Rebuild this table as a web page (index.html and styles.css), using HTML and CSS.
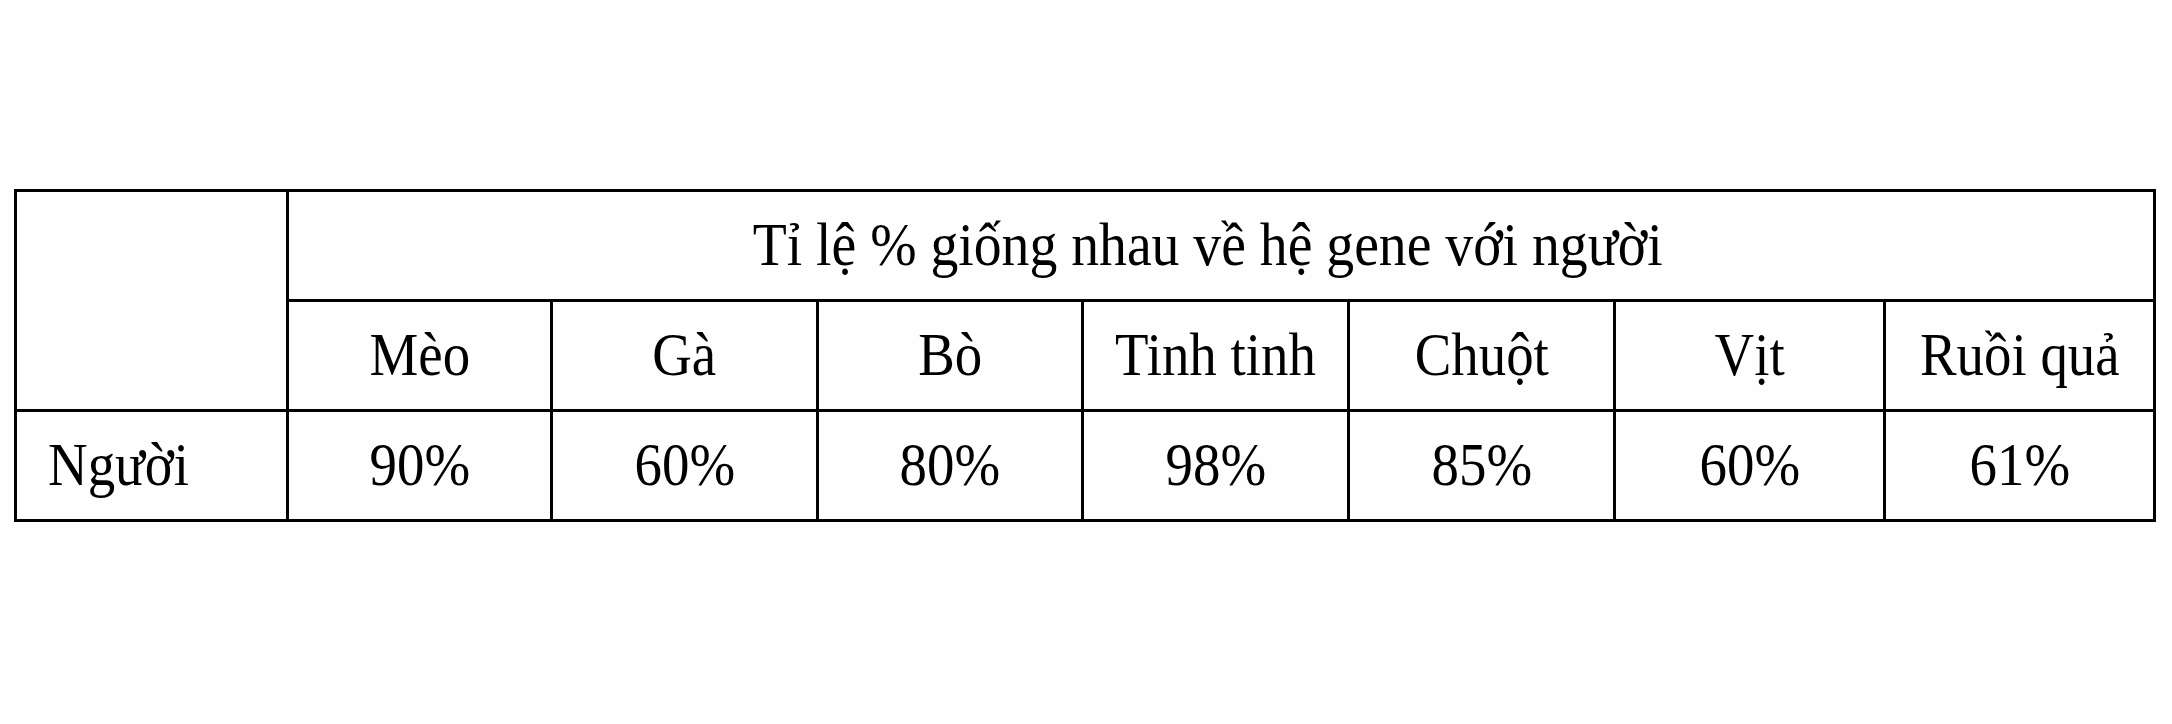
FILE: index.html
```html
<!DOCTYPE html>
<html lang="vi">
<head>
<meta charset="utf-8">
<title>Tỉ lệ % giống nhau về hệ gene với người</title>
<link rel="stylesheet" href="styles.css">
</head>
<body>
<div class="grid">
  <div class="cell corner"></div>
  <div class="cell title"><span class="t">Tỉ lệ % giống nhau về hệ gene với người</span></div>
  <div class="cell"><span class="t">Mèo</span></div>
  <div class="cell"><span class="t">Gà</span></div>
  <div class="cell"><span class="t">Bò</span></div>
  <div class="cell"><span class="t">Tinh tinh</span></div>
  <div class="cell"><span class="t">Chuột</span></div>
  <div class="cell"><span class="t">Vịt</span></div>
  <div class="cell"><span class="t">Ruồi quả</span></div>
  <div class="cell label"><span class="t">Người</span></div>
  <div class="cell"><span class="t">90%</span></div>
  <div class="cell"><span class="t">60%</span></div>
  <div class="cell"><span class="t">80%</span></div>
  <div class="cell"><span class="t">98%</span></div>
  <div class="cell"><span class="t">85%</span></div>
  <div class="cell"><span class="t">60%</span></div>
  <div class="cell"><span class="t">61%</span></div>
</div>
</body>
</html>
```
FILE: styles.css
```css
html, body {
  margin: 0;
  padding: 0;
  background: #fefefe;
}
body {
  font-family: "Liberation Serif", "Times New Roman", serif;
  color: #000;
}
.grid {
  display: grid;
  grid-template-columns: 272px 264px 266px 265px 266px 266px 270px 270px;
  grid-template-rows: 110px 110px 110px;
  width: max-content;
  margin: 189px 0 0 14px;
  border-top: 3px solid #000;
  border-left: 3px solid #000;
}
.cell {
  box-sizing: border-box;
  border-right: 3px solid #000;
  border-bottom: 3px solid #000;
  padding-top: 21px;
  font-size: 62px;
  line-height: 62px;
  text-align: center;
  white-space: nowrap;
  overflow: hidden;
}
.t {
  display: inline-block;
  transform: scaleX(0.885);
  transform-origin: center;
}
.corner {
  grid-row: span 2;
}
.title {
  grid-column: span 7;
  padding-right: 26px;
}
.title .t {
  transform: scaleX(0.898);
}
.label {
  text-align: left;
  padding-left: 31px;
}
.label .t {
  transform-origin: left;
}
```
